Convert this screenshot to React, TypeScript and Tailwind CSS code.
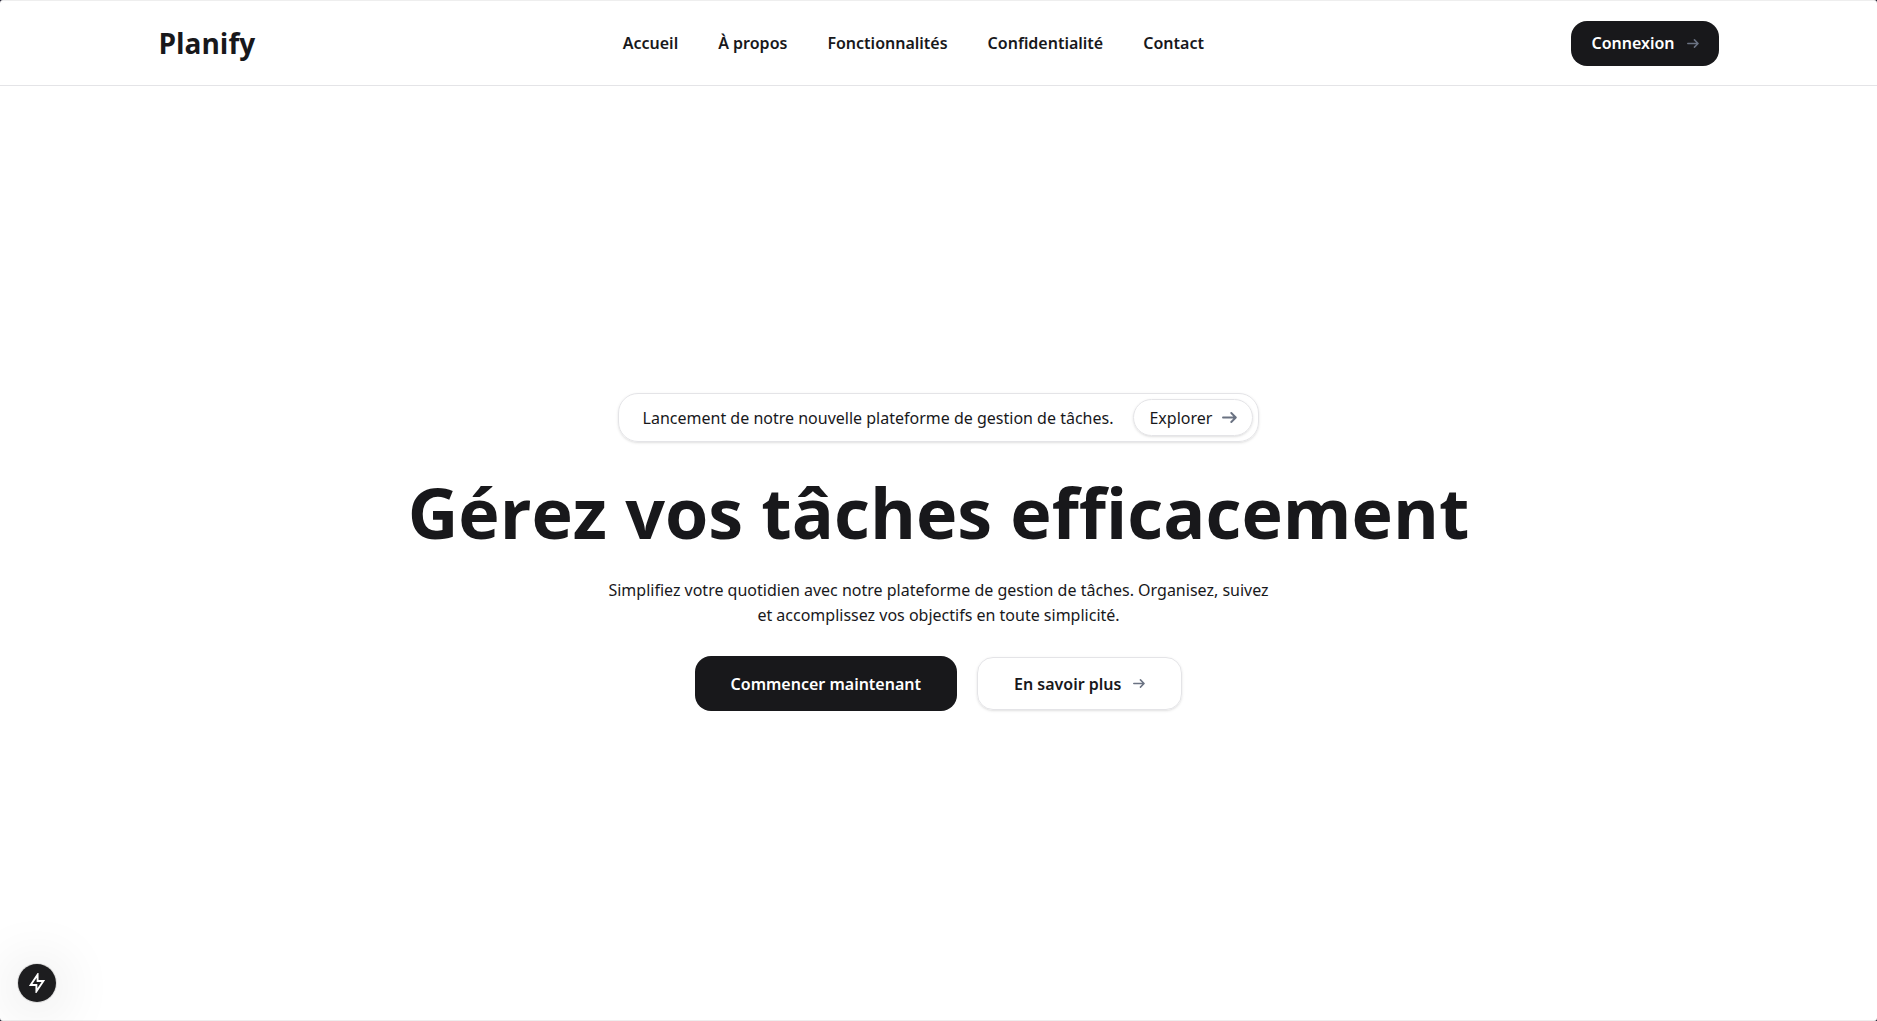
import { useState } from "react";

const links = ["Accueil", "À propos", "Fonctionnalités", "Confidentialité", "Contact"];

function Arrow({ className }: { className: string }) {
  return (
    <svg
      viewBox="0 0 15 11"
      fill="none"
      stroke="currentColor"
      strokeWidth="1.9"
      strokeLinecap="round"
      strokeLinejoin="round"
      aria-hidden="true"
      className={className}
    >
      <path d="M1 5.5H13.6M9.3 1L13.8 5.5L9.3 10" />
    </svg>
  );
}

export default function App() {
  const [pressed, setPressed] = useState(false);
  return (
    <div className="min-h-screen bg-[#1d1b2e]">
      <div className="flex min-h-screen flex-col rounded-[3px] border-y border-[#eeeeee] bg-white font-['Noto_Sans','Open_Sans',sans-serif] text-[#18181b]">
        <header className="border-b border-zinc-200">
          <div className="mx-auto flex h-[84px] w-10/12 items-center justify-between px-0.5">
            <a href="#" className="font-['Open_Sans','Noto_Sans',sans-serif] text-[28px] font-bold">Planify</a>
            <nav className="flex gap-10 text-base font-semibold">
              {links.map((label) => (
                <a key={label} href="#">{label}</a>
              ))}
            </nav>
            <button className="flex h-[45px] items-center gap-3 rounded-2xl bg-[#18181b] px-5 text-base font-semibold text-white">
              Connexion
              <Arrow className="h-[9px] w-3 text-gray-500" />
            </button>
          </div>
        </header>
        <main className="flex flex-1 flex-col items-center justify-center pb-0.5">
          <div className="flex h-[49px] items-center gap-5 rounded-[20px] border border-zinc-200 pr-[5px] pl-6 text-base shadow-sm">
            <p>Lancement de notre nouvelle plateforme de gestion de tâches.</p>
            <button className="flex h-[37px] items-center gap-2.5 rounded-[20px] border border-zinc-200 px-[15px] shadow-sm">
              Explorer
              <Arrow className="h-[11px] w-[15px] text-gray-500" />
            </button>
          </div>
          <h1 className="mt-7 font-['Open_Sans','Noto_Sans',sans-serif] text-[70px] leading-[84px] font-bold">
            Gérez vos tâches efficacement
          </h1>
          <p className="mt-6 max-w-[670px] text-center text-base leading-[25px]">
            Simplifiez votre quotidien avec notre plateforme de gestion de tâches. Organisez, suivez
            et accomplissez vos objectifs en toute simplicité.
          </p>
          <div className="mt-7 flex items-center gap-5">
            <button className="h-[55px] rounded-2xl bg-[#18181b] px-9 text-base font-semibold text-white">
              Commencer maintenant
            </button>
            <button className="flex h-[53px] items-center gap-3 rounded-2xl border border-zinc-200 px-9 text-base font-semibold shadow-sm">
              En savoir plus
              <Arrow className="h-[9px] w-3 text-gray-500" />
            </button>
          </div>
        </main>
      </div>
      <button
        aria-label="Indicateur"
        aria-pressed={pressed}
        onClick={() => setPressed(!pressed)}
        className="fixed bottom-[19px] left-[18px] flex size-[38px] items-center justify-center rounded-full bg-[#1d1d1f] text-white shadow-[0_0_0_1px_rgba(0,0,0,0.1),0_4px_60px_rgba(0,0,0,0.2)]"
      >
        <svg viewBox="0 0 16 20" fill="none" className="h-5 w-4" aria-hidden="true">
          <path d="M8.6 1.6V8H14.4L7.4 18.4V12H1.6L8.6 1.6Z" stroke="currentColor" strokeWidth="1.9" />
        </svg>
      </button>
    </div>
  );
}
